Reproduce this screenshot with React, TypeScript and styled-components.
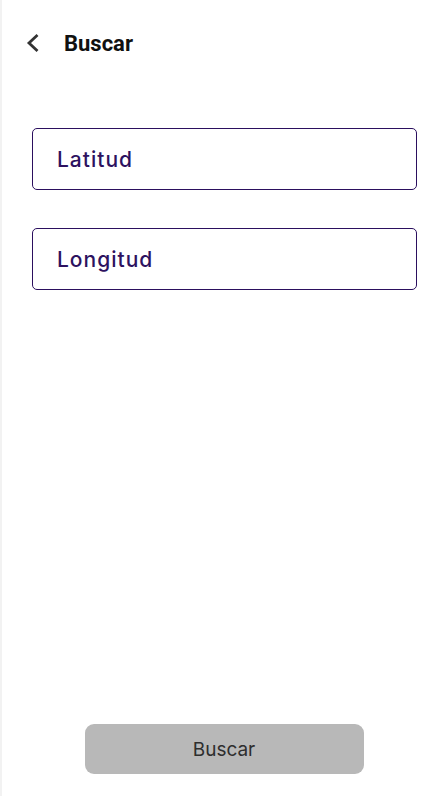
import React from "react";
import styled, { createGlobalStyle } from "styled-components";

const Global = createGlobalStyle`
  html, body { margin: 0; padding: 0; background: #ffffff; }
  * { box-sizing: border-box; }
`;

const Screen = styled.div`
  width: 448px;
  height: 796px;
  display: flex;
  flex-direction: column;
  background: #ffffff;
  border-left: 2px solid #f2f2f2;
  font-family: Roboto, "Liberation Sans", sans-serif;
`;

const Header = styled.header`
  display: flex;
  align-items: center;
  height: 86px;
  padding: 0 0 0 22px;
  gap: 22px;
`;

const BackButton = styled.button`
  width: 18px;
  height: 24px;
  padding: 0;
  border: none;
  background: none;
  display: flex;
  align-items: center;
  justify-content: center;
`;

const Title = styled.h1`
  margin: 0;
  font-family: Roboto, "Liberation Sans", sans-serif;
  font-weight: 700;
  font-size: 22px;
  color: #111111;
`;

const Form = styled.div`
  display: flex;
  flex-direction: column;
  gap: 38px;
  padding: 42px 31px 0 30px;
`;

const Field = styled.div`
  height: 62px;
  border: 1px solid #2b0f5e;
  border-radius: 5px;
  display: flex;
  align-items: center;
  padding-left: 24px;
  font-family: Inter, "Open Sans", sans-serif;
  font-size: 21px;
  letter-spacing: 1px;
  font-weight: 500;
  color: #2d1260;
`;

const Spacer = styled.div`
  flex: 1;
`;

const Footer = styled.div`
  display: flex;
  justify-content: center;
  padding: 0 0 22px 0;
`;

const SubmitButton = styled.button`
  width: 279px;
  height: 50px;
  margin-right: 2px;
  border: none;
  border-radius: 9px;
  background: #b8b8b8;
  color: #2e2e2e;
  font-family: Inter, Roboto, sans-serif;
  font-size: 19px;
  font-weight: 400;
`;

export default function App() {
  return (
    <>
      <Global />
      <Screen>
        <Header>
          <BackButton aria-label="Volver">
            <svg width="16" height="20" viewBox="0 0 16 20">
              <path d="M12.5 2 L4 10 L12.5 18" fill="none" stroke="#333333" strokeWidth="2.8" />
            </svg>
          </BackButton>
          <Title>Buscar</Title>
        </Header>
        <Form>
          <Field>Latitud</Field>
          <Field>Longitud</Field>
        </Form>
        <Spacer />
        <Footer>
          <SubmitButton>Buscar</SubmitButton>
        </Footer>
      </Screen>
    </>
  );
}
